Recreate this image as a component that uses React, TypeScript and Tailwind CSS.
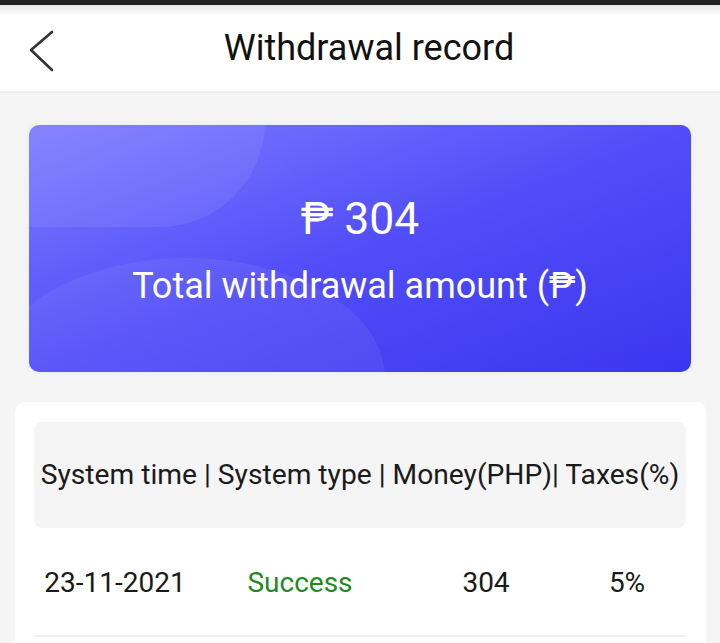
import React from 'react';

const rows = [
    { time: "23-11-2021", type: "Success", money: "304", tax: "5%" },
];

const App: React.FunctionComponent = () => {
    return (
        <div className="w-[720px] h-[643px] overflow-hidden bg-[#f5f5f5] font-['Roboto',sans-serif]">
            <div className="h-[5px] bg-[#212121]" />
            <div className="h-[11px] bg-gradient-to-b from-[#e6e6e6] to-white" />
            <header className="h-[77px] bg-white border-b-2 border-[#efefef] flex items-center">
                <div className="w-[90px] pl-[28px] pb-[6px] flex items-center">
                    <svg width="28" height="44" viewBox="0 0 28 44" fill="none">
                        <path d="M24 3 L3 21 L24 41" stroke="#333" strokeWidth="2.6" strokeLinecap="round" strokeLinejoin="round" />
                    </svg>
                </div>
                <h1 className="flex-1 pr-[72px] pb-[12px] text-center text-[36px] text-[#111] leading-none">Withdrawal record</h1>
            </header>

            <div className="mx-[29px] mt-[32px] h-[247px] rounded-[10px] relative overflow-hidden bg-gradient-to-br from-[#7e7aff] via-[#524df8] to-[#3a35f0] shadow-[0_0_6px_rgba(0,0,0,0.06)]">
                {/* decorative bubbles */}
                <div className="absolute -left-[120px] -top-[110px] w-[356px] h-[212px] rounded-full bg-white/[0.07]" />
                <div className="absolute -left-[40px] top-[133px] w-[396px] h-[240px] rounded-[50%] bg-white/[0.06]" />
                <div className="relative h-full flex flex-col items-center justify-center text-white">
                    <div className="text-[44.5px] leading-none mt-[4px]">₱ 304</div>
                    <div className="text-[36px] leading-none mt-[26px]">Total withdrawal amount (₱)</div>
                </div>
            </div>

            <div className="ml-[15px] mr-[14px] mt-[30px] bg-white rounded-[10px] pt-[20px] pl-[19px] pr-[20px] h-[300px]">
                <div className="h-[106px] bg-[#f5f5f5] rounded-[8px] flex items-center justify-center text-[28.2px] text-[#1a1a1a] whitespace-nowrap">
                    System time | System type | Money(PHP)| Taxes(%)
                </div>
                {rows.map((r) => (
                    <div key={r.time} className="h-[109px] pt-[2px] grid grid-cols-[162px_208px_164px_118px] items-center text-center text-[28px] text-[#1a1a1a] border-b-2 border-[#f0f0f0]">
                        <div>{r.time}</div>
                        <div className="text-[#1e8a1e]">{r.type}</div>
                        <div>{r.money}</div>
                        <div>{r.tax}</div>
                    </div>
                ))}
            </div>
        </div>
    );
};

export default App;
